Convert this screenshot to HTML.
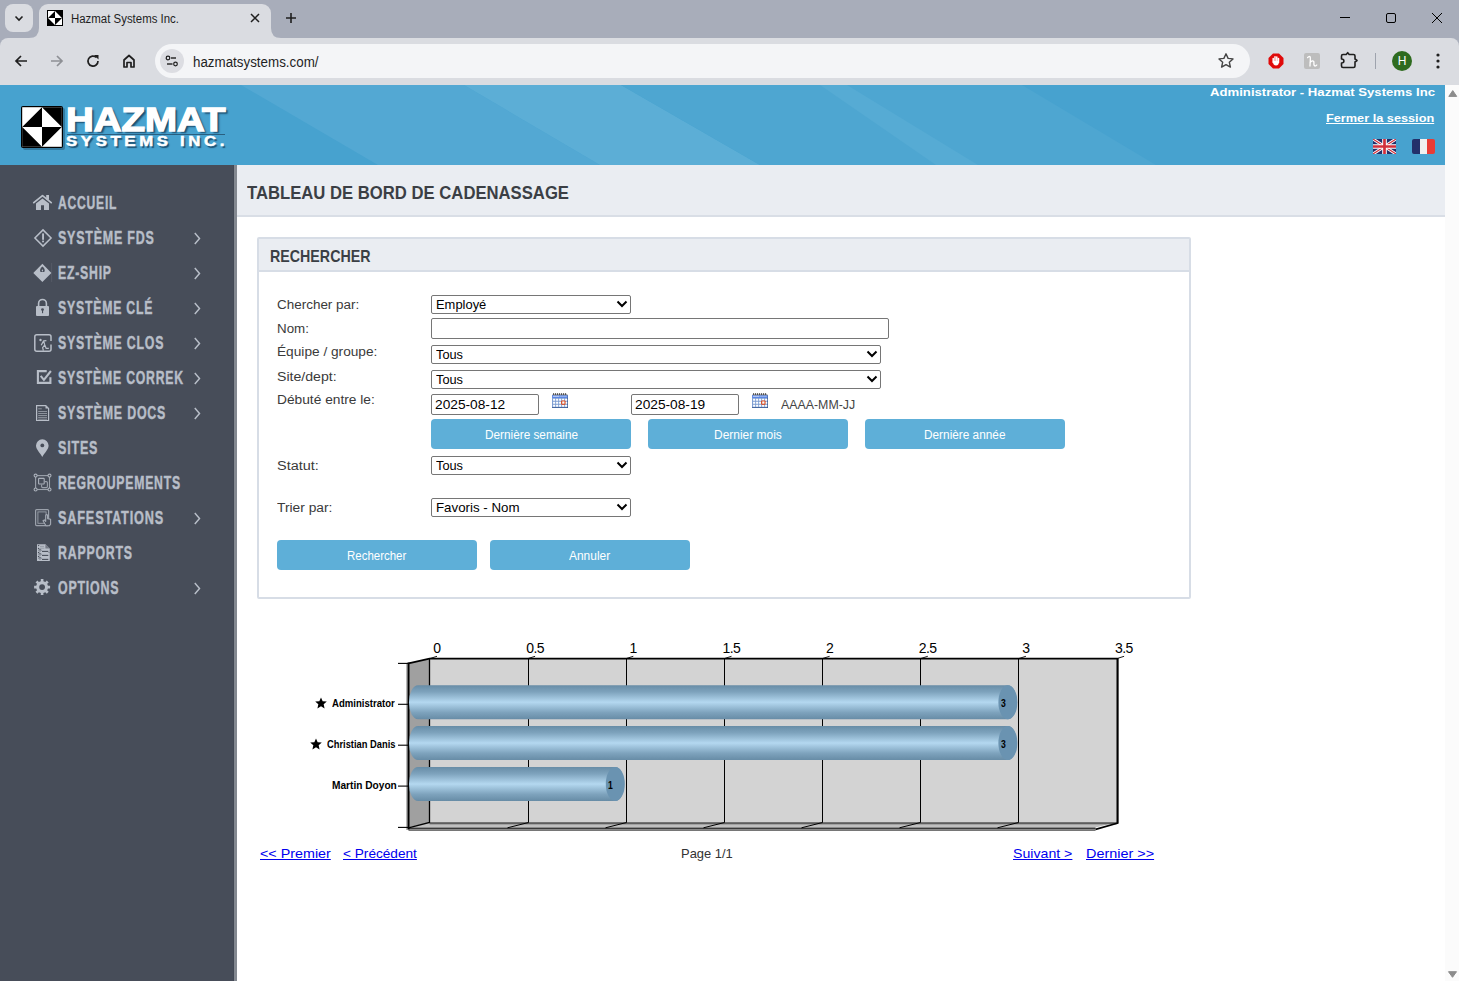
<!DOCTYPE html>
<html><head><meta charset="utf-8">
<style>
*{box-sizing:border-box;margin:0;padding:0}
html,body{width:1459px;height:981px;overflow:hidden;background:#fff;font-family:"Liberation Sans",sans-serif}
.a{position:absolute}
.t{position:absolute;white-space:nowrap;transform-origin:0 0}
</style></head><body>
<div class="a" style="left:0;top:0;width:1459px;height:48px;background:#a8adba"></div>
<div class="a" style="left:5px;top:4px;width:28px;height:28px;background:#dadce1;border-radius:8px"></div>
<svg class="a" style="left:13px;top:12px" width="12" height="12" viewBox="0 0 12 12"><path d="M2.5 4.5 L6 8 L9.5 4.5" fill="none" stroke="#1f1f1f" stroke-width="1.6"/></svg>
<div class="a" style="left:0;top:38px;width:1459px;height:47px;background:#dadce1;border-radius:8px 8px 0 0"></div>
<div class="a" style="left:39px;top:4px;width:232px;height:40px;background:#dadce1;border-radius:9px 9px 0 0"></div>
<svg class="a" style="left:29px;top:28px" width="10" height="10"><path d="M0 10 Q10 10 10 0 L10 10 Z" fill="#dadce1"/></svg>
<svg class="a" style="left:271px;top:28px" width="10" height="10"><path d="M10 10 Q0 10 0 0 L0 10 Z" fill="#dadce1"/></svg>
<svg class="a" style="left:47px;top:10px" width="16" height="16" viewBox="0 0 16 16"><rect x="0" y="0" width="16" height="16" fill="#000"/><rect x="1" y="1" width="14" height="14" fill="#fff"/><path d="M1 8 L8 1 L8 8 Z M8 1 L15 1 L15 8 Z M1 8 L1 15 L8 15 Z M8 8 L15 8 L8 15 Z" fill="#000"/></svg>
<svg class="a" style="left:250px;top:13px" width="10" height="10" viewBox="0 0 10 10"><path d="M1 1 L9 9 M9 1 L1 9" stroke="#1f1f1f" stroke-width="1.5"/></svg>
<svg class="a" style="left:285px;top:12px" width="12" height="12" viewBox="0 0 12 12"><path d="M6 1 V11 M1 6 H11" stroke="#1f1f1f" stroke-width="1.6"/></svg>
<svg class="a" style="left:1339px;top:12px" width="12" height="12"><path d="M1 5.5 H11" stroke="#000" stroke-width="1"/></svg>
<svg class="a" style="left:1385px;top:12px" width="12" height="12"><rect x="1.5" y="1.5" width="9" height="9" rx="1.5" fill="none" stroke="#000" stroke-width="1"/></svg>
<svg class="a" style="left:1431px;top:12px" width="12" height="12"><path d="M1 1 L11 11 M11 1 L1 11" stroke="#000" stroke-width="1"/></svg>
<svg class="a" style="left:13px;top:53px" width="16" height="16" viewBox="0 0 16 16"><path d="M14 8 H3 M8 3 L3 8 L8 13" fill="none" stroke="#1f1f1f" stroke-width="1.7"/></svg>
<svg class="a" style="left:49px;top:53px" width="16" height="16" viewBox="0 0 16 16"><path d="M2 8 H13 M8 3 L13 8 L8 13" fill="none" stroke="#8e9095" stroke-width="1.7"/></svg>
<svg class="a" style="left:85px;top:53px" width="16" height="16" viewBox="0 0 16 16"><path d="M13 8 A5 5 0 1 1 11.5 4.5" fill="none" stroke="#1f1f1f" stroke-width="1.7"/><path d="M9 2 H13.5 V6.5 Z" fill="#1f1f1f"/></svg>
<svg class="a" style="left:121px;top:53px" width="16" height="16" viewBox="0 0 16 16"><path d="M3 14 V7 L8 2.5 L13 7 V14 H10 V9.5 H6 V14 Z" fill="none" stroke="#1f1f1f" stroke-width="1.7" stroke-linejoin="round"/></svg>
<div class="a" style="left:155px;top:44px;width:1095px;height:34px;background:#f4f5f7;border-radius:17px"></div>
<div class="a" style="left:160px;top:49px;width:24px;height:24px;border-radius:12px;background:#dcdde2"></div>
<svg class="a" style="left:164px;top:53px" width="16" height="16" viewBox="0 0 16 16"><circle cx="4" cy="5" r="1.8" fill="none" stroke="#1f1f1f" stroke-width="1.2"/><path d="M7 5 H12" stroke="#1f1f1f" stroke-width="1.4"/><circle cx="11.5" cy="11" r="1.8" fill="none" stroke="#1f1f1f" stroke-width="1.2"/><path d="M3 11 H8.5" stroke="#1f1f1f" stroke-width="1.4"/></svg>
<svg class="a" style="left:1217px;top:52px" width="18" height="18" viewBox="0 0 18 18"><path d="M9 1.8 L11.1 6.4 L16 6.9 L12.3 10.2 L13.4 15.1 L9 12.6 L4.6 15.1 L5.7 10.2 L2 6.9 L6.9 6.4 Z" fill="none" stroke="#444" stroke-width="1.4" stroke-linejoin="round"/></svg>
<svg class="a" style="left:1268px;top:53px" width="16" height="16" viewBox="0 0 16 16"><path d="M5 0.5 H11 L15.5 5 V11 L11 15.5 H5 L0.5 11 V5 Z" fill="#e00a0a"/><path d="M5.2 9.5 V5.5 M7 9 V3.8 M8.8 9 V4 M10.5 9.5 V5.5" stroke="#fff" stroke-width="1.5" stroke-linecap="round"/><path d="M4.8 8 Q5 12.5 8 12.5 Q11 12.5 11 8 Z" fill="#fff"/></svg>
<div class="a" style="left:1304px;top:53px;width:16px;height:16px;background:#bdbdbd;border-radius:2px"></div>
<svg class="a" style="left:1304px;top:53px" width="16" height="16" viewBox="0 0 16 16"><path d="M3.6 4.6 C4.4 3.4 5.8 3.2 6.2 4 C6.6 5 6.1 9 6 13 M6 9.6 C7.6 7.6 9.8 7.4 9.9 9.2 C10 10.6 9.4 12.8 11 13 C11.8 13 12.4 12.6 12.8 12" fill="none" stroke="#fff" stroke-width="1.3" stroke-linecap="round" stroke-linejoin="round"/></svg>
<svg class="a" style="left:1338px;top:50px" width="22" height="22" viewBox="0 0 22 22"><path d="M5 4.5 H8.2 L9.7 2.7 L11.2 4.5 H15.5 A1.5 1.5 0 0 1 17 6 V9 L19 10.5 L17 12 V16 A1.5 1.5 0 0 1 15.5 17.5 H5 A1.5 1.5 0 0 1 3.5 16 V13 A2.4 2 0 0 0 3.5 9 V6 A1.5 1.5 0 0 1 5 4.5 Z" fill="none" stroke="#1f1f1f" stroke-width="1.6" stroke-linejoin="round"/></svg>
<div class="a" style="left:1375px;top:53px;width:1px;height:16px;background:#9ea3ad"></div>
<div class="a" style="left:1392px;top:51px;width:20px;height:20px;border-radius:10px;background:#2e6b1f;color:#fff;font-size:12px;text-align:center;line-height:20px">H</div>
<svg class="a" style="left:1434px;top:52px" width="8" height="18"><circle cx="4" cy="3" r="1.6" fill="#1f1f1f"/><circle cx="4" cy="9" r="1.6" fill="#1f1f1f"/><circle cx="4" cy="15" r="1.6" fill="#1f1f1f"/></svg>
<svg class="a" style="left:0;top:85px" width="1445" height="80" viewBox="0 0 1445 80">
<rect width="1445" height="80" fill="#47a2cf"/>
<polygon points="241,0 464,0 600,80 378,80" fill="#53a8d3"/>
<polygon points="464,0 621,0 760,80 600,80" fill="#5caed6"/>
<polygon points="621,0 1022,0 1156,80 760,80" fill="#4ea6d1"/>
<polygon points="820,0 847,0 978,80 936,80" fill="#56abd4"/>
</svg>
<svg class="a" style="left:21px;top:106px" width="45" height="45" viewBox="0 0 45 45">
<rect x="2" y="2" width="42" height="42" rx="2" fill="#1b4a66" opacity="0.45"/>
<rect x="0" y="0" width="42" height="42" rx="2" fill="#000"/>
<rect x="1.2" y="1.2" width="39.6" height="39.6" fill="#fff"/>
<path d="M1.2 21 L21 1.2 L21 21 Z M21 1.2 L40.8 1.2 L40.8 21 Z M1.2 21 L1.2 40.8 L21 40.8 Z M21 21 L40.8 21 L21 40.8 Z" fill="#000"/>
</svg>
<div class="a" style="left:67px;top:133.5px;width:158px;height:1px;background:#2a5f80"></div>
<svg class="a" style="left:1373px;top:139px" width="23" height="15" viewBox="0 0 60 40" preserveAspectRatio="none">
<rect width="60" height="40" fill="#22306b"/>
<path d="M0 0 L60 40 M60 0 L0 40" stroke="#fff" stroke-width="8"/>
<path d="M0 0 L60 40 M60 0 L0 40" stroke="#d22f3a" stroke-width="3"/>
<path d="M30 0 V40 M0 20 H60" stroke="#fff" stroke-width="12"/>
<path d="M30 0 V40 M0 20 H60" stroke="#d22f3a" stroke-width="7"/>
</svg>
<div class="a" style="left:1412px;top:139px;width:23px;height:15px;border-radius:2px;overflow:hidden;background:linear-gradient(90deg,#23306a 0,#23306a 33%,#f0f0f0 33%,#f0f0f0 66%,#e83b35 66%)"></div>
<div class="a" style="left:0;top:165px;width:235px;height:816px;background:#474d59"></div>
<div class="a" style="left:233px;top:165px;width:1px;height:816px;background:#434955"></div>
<div class="a" style="left:234px;top:165px;width:3px;height:816px;background:#838890"></div>
<svg class="a" style="left:0;top:0" width="60" height="620" viewBox="0 0 60 620">
<path d="M33.8 202.6 L42.5 195.6 L51.2 202.6" fill="none" stroke="#b8bec8" stroke-width="1.8" stroke-linecap="round" stroke-linejoin="round"/>
<rect x="46.2" y="195" width="2.8" height="4.8" fill="#b8bec8"/>
<path d="M36 203.6 L42.5 198.4 L49 203.6 V210 H44 V205.2 H41 V210 H36 Z" fill="#b8bec8"/>
<polygon points="43,229.9 51.1,238 43,246.1 34.9,238" fill="none" stroke="#b8bec8" stroke-width="1.5"/>
<rect x="42.1" y="233.4" width="1.9" height="6.4" fill="#b8bec8"/><rect x="42.1" y="240.6" width="1.9" height="1.7" fill="#b8bec8"/>
<polygon points="42.4,263.8 51.4,273 42.4,282 33.3,273" fill="#b8bec8"/>
<path d="M42.4 266.6 C44.6 268.4 45.3 270.2 44.3 272 H40.5 C39.5 270.2 40.2 268.4 42.4 266.6 Z" fill="#474d59"/>
<path d="M42.4 269.2 C43.2 270 43.3 271 42.4 271.6 C41.5 271 41.6 270 42.4 269.2 Z" fill="#b8bec8"/>
<rect x="51.3" y="263" width="0.8" height="19" fill="#6a707b" opacity="0.5"/>
<path d="M38.6 306.5 V303.4 A3.9 3.9 0 0 1 46.4 303.4 V306.5" fill="none" stroke="#b8bec8" stroke-width="1.6"/>
<rect x="36" y="306" width="13" height="10" rx="1" fill="#b8bec8"/>
<circle cx="42.5" cy="309.6" r="1.4" fill="#474d59"/><rect x="42" y="310" width="1.1" height="3.2" fill="#474d59"/>
<path d="M51 341 V336.8 A2 2 0 0 0 49 334.8 H36.8 A2 2 0 0 0 34.8 336.8 V349.2 A2 2 0 0 0 36.8 351.2 H49 A2 2 0 0 0 51 349.2 V344.6" fill="none" stroke="#b8bec8" stroke-width="1.5"/>
<circle cx="40.5" cy="340" r="1.2" fill="#b8bec8"/>
<path d="M46.4 340.6 L43.6 340.9 L41.2 345.2 M43.6 340.9 L44.8 345 L46.2 348.4 L48.8 348.4 M44.8 345 L42.6 347.6 L43.4 350.6" fill="none" stroke="#b8bec8" stroke-width="1.25" stroke-linejoin="round"/>
<path d="M46.7 371.1 H37.9 V382.9 H50.4 V377.2" fill="none" stroke="#b8bec8" stroke-width="2.1"/>
<path d="M40.7 375.8 L43.9 379.8 L50.9 371" fill="none" stroke="#b8bec8" stroke-width="2.1"/>
<path d="M36.6 405.6 H45.8 L48.6 408.4 V420.5 H36.6 Z" fill="none" stroke="#b8bec8" stroke-width="1.2"/>
<path d="M45.5 405.6 V408.6 H48.6 Z" fill="#b8bec8"/>
<path d="M38.2 408.8 H41.8" stroke="#8d939d" stroke-width="1"/>
<path d="M38.2 411.5 H47" stroke="#8d939d" stroke-width="1"/>
<path d="M38.2 413.5 H47" stroke="#8d939d" stroke-width="1"/>
<path d="M38.2 415.5 H47" stroke="#8d939d" stroke-width="1"/>
<path d="M38.2 417.4 H47" stroke="#8d939d" stroke-width="1"/>
<path d="M38.2 419.2 H47" stroke="#8d939d" stroke-width="1"/>
<path d="M42.3 456.9 C40.2 453.2 36 449.6 36 445.6 A6.3 6.3 0 0 1 48.6 445.6 C48.6 449.6 44.4 453.2 42.3 456.9 Z" fill="#b8bec8"/>
<circle cx="42.3" cy="445.4" r="1.9" fill="#474d59"/>
<rect x="35.6" y="475.6" width="13.9" height="13.9" fill="none" stroke="#9ba1ab" stroke-width="1.1"/>
<circle cx="35.6" cy="475.6" r="1.5" fill="#474d59" stroke="#aab0ba" stroke-width="1.1"/>
<circle cx="49.5" cy="475.6" r="1.5" fill="#474d59" stroke="#aab0ba" stroke-width="1.1"/>
<circle cx="35.6" cy="489.5" r="1.5" fill="#474d59" stroke="#aab0ba" stroke-width="1.1"/>
<circle cx="49.5" cy="489.5" r="1.5" fill="#474d59" stroke="#aab0ba" stroke-width="1.1"/>
<rect x="38.6" y="478.4" width="5.6" height="5.6" rx="0.6" fill="none" stroke="#aab0ba" stroke-width="1.1"/>
<path d="M44.6 481.6 H46.4 A1 1 0 0 1 47.4 482.6 V486.6 A1 1 0 0 1 46.4 487.6 H42.6 A1 1 0 0 1 41.6 486.6 V484.6" fill="none" stroke="#9ba1ab" stroke-width="1.1"/>
<rect x="35.6" y="509.6" width="13" height="16" rx="1" fill="none" stroke="#9ba1ab" stroke-width="1.2"/>
<rect x="37.9" y="511.9" width="8.2" height="11.4" fill="none" stroke="#9ba1ab" stroke-width="0.9"/>
<path d="M46 525.8 L43 520.8 L44.3 519.9 L45.7 521.4 V515.6 A0.95 0.95 0 0 1 47.6 515.6 V518.6 L50.6 519.3 V524.2 L49.3 525.8 Z" fill="#474d59" stroke="#a5abb5" stroke-width="1.1" stroke-linejoin="round"/>
<path d="M37 544.2 H45.6 L49.8 548.4 V561 H37 Z" fill="#b8bec8"/>
<path d="M45.4 544.2 L49.8 548.6 H45.4 Z" fill="#474d59" opacity="0.6"/>
<circle cx="38.6" cy="545.6" r="0.7" fill="#474d59"/>
<circle cx="38.6" cy="548.5" r="0.7" fill="#474d59"/>
<circle cx="38.6" cy="552.5" r="0.7" fill="#474d59"/>
<circle cx="38.6" cy="556.5" r="0.7" fill="#474d59"/>
<path d="M40 546.4 H44 M40 548.2 H44.4" stroke="#8d939d" stroke-width="0.8"/>
<path d="M42 551.4 H48.3" stroke="#474d59" stroke-width="1.1"/>
<ellipse cx="40" cy="550.1999999999999" rx="1.3" ry="0.9" fill="none" stroke="#474d59" stroke-width="0.6"/>
<path d="M42 555.4 H48.3" stroke="#474d59" stroke-width="1.1"/>
<ellipse cx="40" cy="554.1999999999999" rx="1.3" ry="0.9" fill="none" stroke="#474d59" stroke-width="0.6"/>
<path d="M42 559.4 H48.3" stroke="#474d59" stroke-width="1.1"/>
<ellipse cx="40" cy="558.1999999999999" rx="1.3" ry="0.9" fill="none" stroke="#474d59" stroke-width="0.6"/>
<path d="M49 552 V553" stroke="#474d59" stroke-width="0.6"/>
<path d="M40.81 581.24 L40.77 579.11 L43.43 579.11 L43.39 581.24 L45.33 582.05 L46.81 580.51 L48.69 582.39 L47.15 583.87 L47.96 585.81 L50.09 585.77 L50.09 588.43 L47.96 588.39 L47.15 590.33 L48.69 591.81 L46.81 593.69 L45.33 592.15 L43.39 592.96 L43.43 595.09 L40.77 595.09 L40.81 592.96 L38.87 592.15 L37.39 593.69 L35.51 591.81 L37.05 590.33 L36.24 588.39 L34.11 588.43 L34.11 585.77 L36.24 585.81 L37.05 583.87 L35.51 582.39 L37.39 580.51 L38.87 582.05 Z" fill="#b8bec8"/>
<circle cx="42.1" cy="587.1" r="2.9" fill="#474d59"/>
</svg>
<svg class="a" style="left:193px;top:232.1px" width="8" height="13" viewBox="0 0 8 13"><path d="M1.8 1 L6.5 6.5 L1.8 12" fill="none" stroke="#b8bec8" stroke-width="1.5"/></svg>
<svg class="a" style="left:193px;top:267.1px" width="8" height="13" viewBox="0 0 8 13"><path d="M1.8 1 L6.5 6.5 L1.8 12" fill="none" stroke="#b8bec8" stroke-width="1.5"/></svg>
<svg class="a" style="left:193px;top:302.1px" width="8" height="13" viewBox="0 0 8 13"><path d="M1.8 1 L6.5 6.5 L1.8 12" fill="none" stroke="#b8bec8" stroke-width="1.5"/></svg>
<svg class="a" style="left:193px;top:337.1px" width="8" height="13" viewBox="0 0 8 13"><path d="M1.8 1 L6.5 6.5 L1.8 12" fill="none" stroke="#b8bec8" stroke-width="1.5"/></svg>
<svg class="a" style="left:193px;top:372.1px" width="8" height="13" viewBox="0 0 8 13"><path d="M1.8 1 L6.5 6.5 L1.8 12" fill="none" stroke="#b8bec8" stroke-width="1.5"/></svg>
<svg class="a" style="left:193px;top:407.1px" width="8" height="13" viewBox="0 0 8 13"><path d="M1.8 1 L6.5 6.5 L1.8 12" fill="none" stroke="#b8bec8" stroke-width="1.5"/></svg>
<svg class="a" style="left:193px;top:512.1px" width="8" height="13" viewBox="0 0 8 13"><path d="M1.8 1 L6.5 6.5 L1.8 12" fill="none" stroke="#b8bec8" stroke-width="1.5"/></svg>
<svg class="a" style="left:193px;top:582.1px" width="8" height="13" viewBox="0 0 8 13"><path d="M1.8 1 L6.5 6.5 L1.8 12" fill="none" stroke="#b8bec8" stroke-width="1.5"/></svg>
<div class="a" style="left:1445px;top:85px;width:14px;height:896px;background:#fbfbfb"></div>
<svg class="a" style="left:1445px;top:85px" width="14" height="14"><path d="M3.8 11.4 L7.75 5.6 L11.7 11.4 Z" fill="#8c8c8c" stroke="#8c8c8c" stroke-width="1" stroke-linejoin="round"/></svg>
<svg class="a" style="left:1445px;top:966px" width="14" height="14"><path d="M3.5 5.7 L11.5 5.7 L7.5 11.3 Z" fill="#8c8c8c" stroke="#8c8c8c" stroke-width="1" stroke-linejoin="round"/></svg>
<div class="a" style="left:237px;top:165px;width:1208px;height:52px;background:#eaedf2;border-bottom:2px solid #d9dee6"></div>
<div class="a" style="left:257px;top:237px;width:934px;height:362px;border:2px solid #d7dde6;border-radius:2px;background:#fff"></div>
<div class="a" style="left:259px;top:239px;width:930px;height:33px;background:#eaedf2;border-bottom:2px solid #d7dde6"></div>
<div class="a" style="left:431px;top:295px;width:200px;height:19px;border:1px solid #767676;border-radius:2px;background:#fff"></div>
<svg class="a" style="left:616px;top:300px" width="12" height="8" viewBox="0 0 12 8"><path d="M1.5 1.5 L6 6 L10.5 1.5" fill="none" stroke="#000" stroke-width="2"/></svg>
<div class="a" style="left:431px;top:318px;width:458px;height:21px;border:1px solid #767676;border-radius:2px;background:#fff"></div>
<div class="a" style="left:431px;top:345px;width:450px;height:19px;border:1px solid #767676;border-radius:2px;background:#fff"></div>
<svg class="a" style="left:866px;top:350px" width="12" height="8" viewBox="0 0 12 8"><path d="M1.5 1.5 L6 6 L10.5 1.5" fill="none" stroke="#000" stroke-width="2"/></svg>
<div class="a" style="left:431px;top:370px;width:450px;height:19px;border:1px solid #767676;border-radius:2px;background:#fff"></div>
<svg class="a" style="left:866px;top:375px" width="12" height="8" viewBox="0 0 12 8"><path d="M1.5 1.5 L6 6 L10.5 1.5" fill="none" stroke="#000" stroke-width="2"/></svg>
<div class="a" style="left:431px;top:394px;width:108px;height:21px;border:1px solid #767676;border-radius:2px;background:#fff"></div>
<div class="a" style="left:631px;top:394px;width:108px;height:21px;border:1px solid #767676;border-radius:2px;background:#fff"></div>
<svg class="a" style="left:552px;top:393px" width="16" height="16" viewBox="0 0 16 16">
<rect x="0" y="2" width="16" height="13" rx="0.6" fill="#234680"/>
<rect x="0" y="2" width="15.4" height="12.4" fill="#7f9fd3"/>
<rect x="0.2" y="2" width="15.2" height="3" fill="#5a86e6"/>
<rect x="1" y="2.7" width="6.2" height="1" fill="#d6e2fa"/><rect x="7.5" y="2.7" width="7.3" height="1" fill="#a6c0f2"/>
<rect x="1.1" y="5.7" width="2.1" height="2.1" rx="0.3" fill="#fff"/><rect x="1.1" y="8.7" width="2.1" height="2.1" rx="0.3" fill="#fff"/><rect x="1.1" y="11.7" width="2.1" height="2.1" rx="0.3" fill="#fff"/><rect x="4.1" y="5.7" width="2.1" height="2.1" rx="0.3" fill="#fff"/><rect x="4.1" y="8.7" width="2.1" height="2.1" rx="0.3" fill="#fff"/><rect x="4.1" y="11.7" width="2.1" height="2.1" rx="0.3" fill="#fff"/><rect x="7.1" y="5.7" width="2.1" height="2.1" rx="0.3" fill="#fff"/><rect x="7.1" y="8.7" width="2.1" height="2.1" rx="0.3" fill="#fff"/><rect x="7.1" y="11.7" width="2.1" height="2.1" rx="0.3" fill="#fff"/><rect x="10.1" y="5.7" width="2.1" height="2.1" rx="0.3" fill="#fff"/><rect x="10.1" y="8.7" width="2.1" height="2.1" rx="0.3" fill="#fff"/><rect x="10.1" y="11.7" width="2.1" height="2.1" rx="0.3" fill="#fff"/><rect x="13.1" y="5.7" width="2.1" height="2.1" rx="0.3" fill="#fff"/><rect x="13.1" y="8.7" width="2.1" height="2.1" rx="0.3" fill="#fff"/><rect x="13.1" y="11.7" width="2.1" height="2.1" rx="0.3" fill="#fff"/>
<rect x="9.2" y="7.4" width="4.3" height="4.3" rx="0.8" fill="#e2400c"/>
<rect x="10.2" y="8.4" width="2.3" height="2.3" fill="#f0fbff"/>
<path d="M0.5 1.8 H15.5" stroke="#777" stroke-width="0.8"/>
<g fill="#111"><circle cx="1.6" cy="1" r="0.65"/><circle cx="3.6" cy="1" r="0.65"/><circle cx="5.6" cy="1" r="0.65"/><circle cx="7.6" cy="1" r="0.65"/><circle cx="9.6" cy="1" r="0.65"/><circle cx="11.6" cy="1" r="0.65"/><circle cx="13.6" cy="1" r="0.65"/></g>
</svg>
<svg class="a" style="left:752px;top:393px" width="16" height="16" viewBox="0 0 16 16">
<rect x="0" y="2" width="16" height="13" rx="0.6" fill="#234680"/>
<rect x="0" y="2" width="15.4" height="12.4" fill="#7f9fd3"/>
<rect x="0.2" y="2" width="15.2" height="3" fill="#5a86e6"/>
<rect x="1" y="2.7" width="6.2" height="1" fill="#d6e2fa"/><rect x="7.5" y="2.7" width="7.3" height="1" fill="#a6c0f2"/>
<rect x="1.1" y="5.7" width="2.1" height="2.1" rx="0.3" fill="#fff"/><rect x="1.1" y="8.7" width="2.1" height="2.1" rx="0.3" fill="#fff"/><rect x="1.1" y="11.7" width="2.1" height="2.1" rx="0.3" fill="#fff"/><rect x="4.1" y="5.7" width="2.1" height="2.1" rx="0.3" fill="#fff"/><rect x="4.1" y="8.7" width="2.1" height="2.1" rx="0.3" fill="#fff"/><rect x="4.1" y="11.7" width="2.1" height="2.1" rx="0.3" fill="#fff"/><rect x="7.1" y="5.7" width="2.1" height="2.1" rx="0.3" fill="#fff"/><rect x="7.1" y="8.7" width="2.1" height="2.1" rx="0.3" fill="#fff"/><rect x="7.1" y="11.7" width="2.1" height="2.1" rx="0.3" fill="#fff"/><rect x="10.1" y="5.7" width="2.1" height="2.1" rx="0.3" fill="#fff"/><rect x="10.1" y="8.7" width="2.1" height="2.1" rx="0.3" fill="#fff"/><rect x="10.1" y="11.7" width="2.1" height="2.1" rx="0.3" fill="#fff"/><rect x="13.1" y="5.7" width="2.1" height="2.1" rx="0.3" fill="#fff"/><rect x="13.1" y="8.7" width="2.1" height="2.1" rx="0.3" fill="#fff"/><rect x="13.1" y="11.7" width="2.1" height="2.1" rx="0.3" fill="#fff"/>
<rect x="9.2" y="7.4" width="4.3" height="4.3" rx="0.8" fill="#e2400c"/>
<rect x="10.2" y="8.4" width="2.3" height="2.3" fill="#f0fbff"/>
<path d="M0.5 1.8 H15.5" stroke="#777" stroke-width="0.8"/>
<g fill="#111"><circle cx="1.6" cy="1" r="0.65"/><circle cx="3.6" cy="1" r="0.65"/><circle cx="5.6" cy="1" r="0.65"/><circle cx="7.6" cy="1" r="0.65"/><circle cx="9.6" cy="1" r="0.65"/><circle cx="11.6" cy="1" r="0.65"/><circle cx="13.6" cy="1" r="0.65"/></g>
</svg>
<div class="a" style="left:431px;top:419px;width:200px;height:30px;background:#5eafd8;border-radius:4px"></div>
<div class="a" style="left:648px;top:419px;width:200px;height:30px;background:#5eafd8;border-radius:4px"></div>
<div class="a" style="left:865px;top:419px;width:200px;height:30px;background:#5eafd8;border-radius:4px"></div>
<div class="a" style="left:431px;top:456px;width:200px;height:19px;border:1px solid #767676;border-radius:2px;background:#fff"></div>
<svg class="a" style="left:616px;top:461px" width="12" height="8" viewBox="0 0 12 8"><path d="M1.5 1.5 L6 6 L10.5 1.5" fill="none" stroke="#000" stroke-width="2"/></svg>
<div class="a" style="left:431px;top:498px;width:200px;height:19px;border:1px solid #767676;border-radius:2px;background:#fff"></div>
<svg class="a" style="left:616px;top:503px" width="12" height="8" viewBox="0 0 12 8"><path d="M1.5 1.5 L6 6 L10.5 1.5" fill="none" stroke="#000" stroke-width="2"/></svg>
<div class="a" style="left:277px;top:540px;width:200px;height:30px;background:#5eafd8;border-radius:4px"></div>
<div class="a" style="left:490px;top:540px;width:200px;height:30px;background:#5eafd8;border-radius:4px"></div>
<svg class="a" style="left:0;top:0" width="1459" height="981" viewBox="0 0 1459 981">
<defs><linearGradient id="bg" x1="0" y1="0" x2="0" y2="1"><stop offset="0" stop-color="#678ca6"/><stop offset="0.2" stop-color="#7ea3bd"/><stop offset="0.5" stop-color="#b4d8f0"/><stop offset="0.8" stop-color="#7ea3bd"/><stop offset="1" stop-color="#678ca6"/></linearGradient></defs>
<rect x="429.5" y="659" width="687.0500000000002" height="163.5" fill="#d3d3d3"/>
<polygon points="408.5,663.5 429.5,659 429.5,822.5 408.5,827.5" fill="#a0a0a0"/>
<polygon points="429.5,822.2 1116.5500000000002,822.2 1095.5500000000002,827.6 408.5,827.6" fill="#c0c0c0"/>
<rect x="429.5" y="822.2" width="687.0500000000002" height="2.1" fill="#5e5e5e"/>
<rect x="408.5" y="827.5" width="687.0500000000002" height="1.7" fill="#3a3a3a"/>
<rect x="408.5" y="829.2" width="687.0500000000002" height="1.8" fill="#767676"/>
<rect x="406.3" y="663" width="1.2" height="167" fill="#9a9a9a"/>
<path d="M528.5 659 V822.5 L507.5 827.8" fill="none" stroke="#000" stroke-width="1"/>
<path d="M626.5 659 V822.5 L605.5 827.8" fill="none" stroke="#000" stroke-width="1"/>
<path d="M724.5 659 V822.5 L703.5 827.8" fill="none" stroke="#000" stroke-width="1"/>
<path d="M822.5 659 V822.5 L801.5 827.8" fill="none" stroke="#000" stroke-width="1"/>
<path d="M920.5 659 V822.5 L899.5 827.8" fill="none" stroke="#000" stroke-width="1"/>
<path d="M1018.5 659 V822.5 L997.5 827.8" fill="none" stroke="#000" stroke-width="1"/>
<path d="M429.5 659 V822.5 L408.5 827.8" fill="none" stroke="#000" stroke-width="1.3"/>
<path d="M408.5 663.4 L429.5 658.7 H1117.5500000000002" fill="none" stroke="#000" stroke-width="1.7"/>
<path d="M408.5 662.5 V829.5" fill="none" stroke="#000" stroke-width="2"/>
<path d="M1117.5500000000002 658 V823.5" fill="none" stroke="#000" stroke-width="2.2"/>
<path d="M1118.0500000000002 823 L1095.5500000000002 829.3" fill="none" stroke="#000" stroke-width="1.8"/>
<path d="M398 663.4 H408" stroke="#000" stroke-width="1.1"/>
<path d="M398 704.3 H408" stroke="#000" stroke-width="1.1"/>
<path d="M398 745.2 H408" stroke="#000" stroke-width="1.1"/>
<path d="M398 786.1 H408" stroke="#000" stroke-width="1.1"/>
<path d="M398 827.4 H408" stroke="#000" stroke-width="1.1"/>
<path d="M430.0 658.5 L437.0 656.3" stroke="#000" stroke-width="0.9"/>
<path d="M528.1 658.5 L535.1 656.3" stroke="#000" stroke-width="0.9"/>
<path d="M626.3 658.5 L633.3 656.3" stroke="#000" stroke-width="0.9"/>
<path d="M724.5 658.5 L731.5 656.3" stroke="#000" stroke-width="0.9"/>
<path d="M822.6 658.5 L829.6 656.3" stroke="#000" stroke-width="0.9"/>
<path d="M920.8 658.5 L927.8 656.3" stroke="#000" stroke-width="0.9"/>
<path d="M1018.9 658.5 L1025.9 656.3" stroke="#000" stroke-width="0.9"/>
<path d="M1117.1 658.5 L1124.1 656.3" stroke="#000" stroke-width="0.9"/>
<path d="M418 685.2 H1007.9000000000001 A9 17 0 0 1 1007.9000000000001 719.2 H418 A9 17 0 0 1 418 685.2 Z" fill="url(#bg)"/>
<ellipse cx="1007.9" cy="702.2" rx="9.5" ry="17" fill="#6a93b1"/>
<path d="M418 726 H1007.9000000000001 A9 17 0 0 1 1007.9000000000001 760 H418 A9 17 0 0 1 418 726 Z" fill="url(#bg)"/>
<ellipse cx="1007.9" cy="743.0" rx="9.5" ry="17" fill="#6a93b1"/>
<path d="M418 767 H615.3 A9 17 0 0 1 615.3 801 H418 A9 17 0 0 1 418 767 Z" fill="url(#bg)"/>
<ellipse cx="615.3" cy="784.0" rx="9.5" ry="17" fill="#6a93b1"/>
</svg>
<svg class="a" style="left:315px;top:696.8px" width="12" height="12" viewBox="0 0 24 24"><path d="M12.00 0.80 L15.29 8.47 L23.60 9.23 L17.33 14.73 L19.17 22.87 L12.00 18.60 L4.83 22.87 L6.67 14.73 L0.40 9.23 L8.71 8.47 Z" fill="#000"/></svg>
<svg class="a" style="left:309.7px;top:737.6px" width="12" height="12" viewBox="0 0 24 24"><path d="M12.00 0.80 L15.29 8.47 L23.60 9.23 L17.33 14.73 L19.17 22.87 L12.00 18.60 L4.83 22.87 L6.67 14.73 L0.40 9.23 L8.71 8.47 Z" fill="#000"/></svg>
<div class="t" style="left:71.00px;top:13.34px;font-size:12px;line-height:12px;font-weight:normal;color:#1f1f1f;font-family:'Liberation Sans',sans-serif;transform:scaleX(0.9526);">Hazmat Systems Inc.</div>
<div class="t" style="left:192.50px;top:54.65px;font-size:14px;line-height:14px;font-weight:normal;color:#1f1f1f;font-family:'Liberation Sans',sans-serif;transform:scaleX(0.9545);">hazmatsystems.com/</div>
<div class="t" style="left:65.50px;top:104.46px;font-size:32.3px;line-height:32.3px;font-weight:bold;color:#fff;font-family:'Liberation Sans',sans-serif;transform:scaleX(1.1909);-webkit-text-stroke:1.3px #fff;text-shadow:2px 2px 1.5px rgba(0,25,50,.6);">HAZMAT</div>
<div class="t" style="left:66.30px;top:135.22px;font-size:13.8px;line-height:13.8px;font-weight:bold;color:#fff;font-family:'Liberation Sans',sans-serif;transform:scaleX(1.2146);letter-spacing:3px;-webkit-text-stroke:0.5px #fff;text-shadow:1.5px 1.5px 1px rgba(0,25,50,.6);">SYSTEMS INC.</div>
<div class="t" style="left:1210.30px;top:85.88px;font-size:11.6px;line-height:11.6px;font-weight:bold;color:#fff;font-family:'Liberation Sans',sans-serif;transform:scaleX(1.1339);">Administrator - Hazmat Systems Inc</div>
<div class="t" style="left:1326.30px;top:112.48px;font-size:11.6px;line-height:11.6px;font-weight:bold;color:#fff;font-family:'Liberation Sans',sans-serif;transform:scaleX(1.0973);text-decoration:underline;">Fermer la session</div>
<div class="t" style="left:58.30px;top:194.36px;font-size:18.6px;line-height:18.6px;font-weight:bold;color:#b8bec8;font-family:'Liberation Sans',sans-serif;transform:scaleX(0.6502);letter-spacing:1.2px;-webkit-text-stroke:0.45px #b8bec8;">ACCUEIL</div>
<div class="t" style="left:58.30px;top:229.36px;font-size:18.6px;line-height:18.6px;font-weight:bold;color:#b8bec8;font-family:'Liberation Sans',sans-serif;transform:scaleX(0.6689);letter-spacing:1.2px;-webkit-text-stroke:0.45px #b8bec8;">SYSTÈME FDS</div>
<div class="t" style="left:58.30px;top:264.36px;font-size:18.6px;line-height:18.6px;font-weight:bold;color:#b8bec8;font-family:'Liberation Sans',sans-serif;transform:scaleX(0.6581);letter-spacing:1.2px;-webkit-text-stroke:0.45px #b8bec8;">EZ-SHIP</div>
<div class="t" style="left:58.30px;top:299.36px;font-size:18.6px;line-height:18.6px;font-weight:bold;color:#b8bec8;font-family:'Liberation Sans',sans-serif;transform:scaleX(0.6592);letter-spacing:1.2px;-webkit-text-stroke:0.45px #b8bec8;">SYSTÈME CLÉ</div>
<div class="t" style="left:58.30px;top:334.36px;font-size:18.6px;line-height:18.6px;font-weight:bold;color:#b8bec8;font-family:'Liberation Sans',sans-serif;transform:scaleX(0.6634);letter-spacing:1.2px;-webkit-text-stroke:0.45px #b8bec8;">SYSTÈME CLOS</div>
<div class="t" style="left:58.30px;top:369.36px;font-size:18.6px;line-height:18.6px;font-weight:bold;color:#b8bec8;font-family:'Liberation Sans',sans-serif;transform:scaleX(0.6578);letter-spacing:1.2px;-webkit-text-stroke:0.45px #b8bec8;">SYSTÈME CORREK</div>
<div class="t" style="left:58.30px;top:404.36px;font-size:18.6px;line-height:18.6px;font-weight:bold;color:#b8bec8;font-family:'Liberation Sans',sans-serif;transform:scaleX(0.6673);letter-spacing:1.2px;-webkit-text-stroke:0.45px #b8bec8;">SYSTÈME DOCS</div>
<div class="t" style="left:58.30px;top:439.36px;font-size:18.6px;line-height:18.6px;font-weight:bold;color:#b8bec8;font-family:'Liberation Sans',sans-serif;transform:scaleX(0.6730);letter-spacing:1.2px;-webkit-text-stroke:0.45px #b8bec8;">SITES</div>
<div class="t" style="left:58.30px;top:474.36px;font-size:18.6px;line-height:18.6px;font-weight:bold;color:#b8bec8;font-family:'Liberation Sans',sans-serif;transform:scaleX(0.6569);letter-spacing:1.2px;-webkit-text-stroke:0.45px #b8bec8;">REGROUPEMENTS</div>
<div class="t" style="left:58.30px;top:509.36px;font-size:18.6px;line-height:18.6px;font-weight:bold;color:#b8bec8;font-family:'Liberation Sans',sans-serif;transform:scaleX(0.6828);letter-spacing:1.2px;-webkit-text-stroke:0.45px #b8bec8;">SAFESTATIONS</div>
<div class="t" style="left:58.30px;top:544.36px;font-size:18.6px;line-height:18.6px;font-weight:bold;color:#b8bec8;font-family:'Liberation Sans',sans-serif;transform:scaleX(0.6624);letter-spacing:1.2px;-webkit-text-stroke:0.45px #b8bec8;">RAPPORTS</div>
<div class="t" style="left:58.30px;top:579.36px;font-size:18.6px;line-height:18.6px;font-weight:bold;color:#b8bec8;font-family:'Liberation Sans',sans-serif;transform:scaleX(0.6656);letter-spacing:1.2px;-webkit-text-stroke:0.45px #b8bec8;">OPTIONS</div>
<div class="t" style="left:246.50px;top:183.42px;font-size:19px;line-height:19px;font-weight:bold;color:#3b3f45;font-family:'Liberation Sans',sans-serif;transform:scaleX(0.8773);">TABLEAU DE BORD DE CADENASSAGE</div>
<div class="t" style="left:269.50px;top:247.51px;font-size:17px;line-height:17px;font-weight:bold;color:#3b3f45;font-family:'Liberation Sans',sans-serif;transform:scaleX(0.8377);">RECHERCHER</div>
<div class="t" style="left:276.80px;top:298.92px;font-size:12.5px;line-height:12.5px;font-weight:normal;color:#3a3a3a;font-family:'Liberation Sans',sans-serif;transform:scaleX(1.0767);">Chercher par:</div>
<div class="t" style="left:276.80px;top:322.72px;font-size:12.5px;line-height:12.5px;font-weight:normal;color:#3a3a3a;font-family:'Liberation Sans',sans-serif;transform:scaleX(1.0678);">Nom:</div>
<div class="t" style="left:276.80px;top:346.22px;font-size:12.5px;line-height:12.5px;font-weight:normal;color:#3a3a3a;font-family:'Liberation Sans',sans-serif;transform:scaleX(1.0943);">Équipe / groupe:</div>
<div class="t" style="left:276.80px;top:371.32px;font-size:12.5px;line-height:12.5px;font-weight:normal;color:#3a3a3a;font-family:'Liberation Sans',sans-serif;transform:scaleX(1.1301);">Site/dept:</div>
<div class="t" style="left:276.80px;top:394.12px;font-size:12.5px;line-height:12.5px;font-weight:normal;color:#3a3a3a;font-family:'Liberation Sans',sans-serif;transform:scaleX(1.0995);">Débuté entre le:</div>
<div class="t" style="left:276.80px;top:459.92px;font-size:12.5px;line-height:12.5px;font-weight:normal;color:#3a3a3a;font-family:'Liberation Sans',sans-serif;transform:scaleX(1.1594);">Statut:</div>
<div class="t" style="left:276.80px;top:502.12px;font-size:12.5px;line-height:12.5px;font-weight:normal;color:#3a3a3a;font-family:'Liberation Sans',sans-serif;transform:scaleX(1.1025);">Trier par:</div>
<div class="t" style="left:435.80px;top:297.80px;font-size:13px;line-height:13px;font-weight:normal;color:#000;font-family:'Liberation Sans',sans-serif;transform:scaleX(0.9945);">Employé</div>
<div class="t" style="left:435.80px;top:347.80px;font-size:13px;line-height:13px;font-weight:normal;color:#000;font-family:'Liberation Sans',sans-serif;transform:scaleX(0.9829);">Tous</div>
<div class="t" style="left:435.80px;top:372.80px;font-size:13px;line-height:13px;font-weight:normal;color:#000;font-family:'Liberation Sans',sans-serif;transform:scaleX(0.9829);">Tous</div>
<div class="t" style="left:435.00px;top:397.50px;font-size:13px;line-height:13px;font-weight:normal;color:#000;font-family:'Liberation Sans',sans-serif;transform:scaleX(1.0556);">2025-08-12</div>
<div class="t" style="left:635.00px;top:397.50px;font-size:13px;line-height:13px;font-weight:normal;color:#000;font-family:'Liberation Sans',sans-serif;transform:scaleX(1.0556);">2025-08-19</div>
<div class="t" style="left:780.50px;top:399.22px;font-size:12.5px;line-height:12.5px;font-weight:normal;color:#444;font-family:'Liberation Sans',sans-serif;transform:scaleX(0.9893);">AAAA-MM-JJ</div>
<div class="t" style="left:484.50px;top:429.42px;font-size:12.5px;line-height:12.5px;font-weight:normal;color:#fff;font-family:'Liberation Sans',sans-serif;transform:scaleX(0.9425);">Dernière semaine</div>
<div class="t" style="left:714.10px;top:429.42px;font-size:12.5px;line-height:12.5px;font-weight:normal;color:#fff;font-family:'Liberation Sans',sans-serif;transform:scaleX(0.9568);">Dernier mois</div>
<div class="t" style="left:924.25px;top:429.42px;font-size:12.5px;line-height:12.5px;font-weight:normal;color:#fff;font-family:'Liberation Sans',sans-serif;transform:scaleX(0.9458);">Dernière année</div>
<div class="t" style="left:435.80px;top:458.80px;font-size:13px;line-height:13px;font-weight:normal;color:#000;font-family:'Liberation Sans',sans-serif;transform:scaleX(0.9829);">Tous</div>
<div class="t" style="left:435.80px;top:500.80px;font-size:13px;line-height:13px;font-weight:normal;color:#000;font-family:'Liberation Sans',sans-serif;transform:scaleX(1.0230);">Favoris - Nom</div>
<div class="t" style="left:347.35px;top:550.42px;font-size:12.5px;line-height:12.5px;font-weight:normal;color:#fff;font-family:'Liberation Sans',sans-serif;transform:scaleX(0.9176);">Rechercher</div>
<div class="t" style="left:569.40px;top:550.42px;font-size:12.5px;line-height:12.5px;font-weight:normal;color:#fff;font-family:'Liberation Sans',sans-serif;transform:scaleX(0.9561);">Annuler</div>
<div class="t" style="left:433.31px;top:641.45px;font-size:14px;line-height:14px;font-weight:normal;color:#000;font-family:'Liberation Sans',sans-serif;letter-spacing:-0.6px;">0</div>
<div class="t" style="left:526.21px;top:641.45px;font-size:14px;line-height:14px;font-weight:normal;color:#000;font-family:'Liberation Sans',sans-serif;letter-spacing:-0.6px;">0.5</div>
<div class="t" style="left:629.61px;top:641.45px;font-size:14px;line-height:14px;font-weight:normal;color:#000;font-family:'Liberation Sans',sans-serif;letter-spacing:-0.6px;">1</div>
<div class="t" style="left:722.51px;top:641.45px;font-size:14px;line-height:14px;font-weight:normal;color:#000;font-family:'Liberation Sans',sans-serif;letter-spacing:-0.6px;">1.5</div>
<div class="t" style="left:825.91px;top:641.45px;font-size:14px;line-height:14px;font-weight:normal;color:#000;font-family:'Liberation Sans',sans-serif;letter-spacing:-0.6px;">2</div>
<div class="t" style="left:918.81px;top:641.45px;font-size:14px;line-height:14px;font-weight:normal;color:#000;font-family:'Liberation Sans',sans-serif;letter-spacing:-0.6px;">2.5</div>
<div class="t" style="left:1022.21px;top:641.45px;font-size:14px;line-height:14px;font-weight:normal;color:#000;font-family:'Liberation Sans',sans-serif;letter-spacing:-0.6px;">3</div>
<div class="t" style="left:1115.11px;top:641.45px;font-size:14px;line-height:14px;font-weight:normal;color:#000;font-family:'Liberation Sans',sans-serif;letter-spacing:-0.6px;">3.5</div>
<div class="t" style="left:331.70px;top:698.41px;font-size:10.5px;line-height:10.5px;font-weight:bold;color:#000;font-family:'Liberation Sans',sans-serif;transform:scaleX(0.9108);">Administrator</div>
<div class="t" style="left:326.50px;top:739.21px;font-size:10.5px;line-height:10.5px;font-weight:bold;color:#000;font-family:'Liberation Sans',sans-serif;transform:scaleX(0.8892);">Christian Danis</div>
<div class="t" style="left:331.70px;top:779.91px;font-size:10.5px;line-height:10.5px;font-weight:bold;color:#000;font-family:'Liberation Sans',sans-serif;transform:scaleX(0.9658);">Martin Doyon</div>
<div class="t" style="left:1001.20px;top:698.53px;font-size:10px;line-height:10px;font-weight:bold;color:#000;font-family:'Liberation Sans',sans-serif;transform:scaleX(0.8629);">3</div>
<div class="t" style="left:1001.20px;top:739.53px;font-size:10px;line-height:10px;font-weight:bold;color:#000;font-family:'Liberation Sans',sans-serif;transform:scaleX(0.8629);">3</div>
<div class="t" style="left:607.80px;top:780.74px;font-size:10px;line-height:10px;font-weight:bold;color:#000;font-family:'Liberation Sans',sans-serif;transform:scaleX(0.8629);">1</div>
<div class="t" style="left:260.00px;top:847.30px;font-size:13px;line-height:13px;font-weight:normal;color:#0000ee;font-family:'Liberation Sans',sans-serif;transform:scaleX(1.1009);text-decoration:underline;">&lt;&lt; Premier</div>
<div class="t" style="left:343.10px;top:847.30px;font-size:13px;line-height:13px;font-weight:normal;color:#0000ee;font-family:'Liberation Sans',sans-serif;transform:scaleX(1.0487);text-decoration:underline;">&lt; Précédent</div>
<div class="t" style="left:680.90px;top:847.30px;font-size:13px;line-height:13px;font-weight:normal;color:#333;font-family:'Liberation Sans',sans-serif;transform:scaleX(0.9953);">Page 1/1</div>
<div class="t" style="left:1013.40px;top:847.30px;font-size:13px;line-height:13px;font-weight:normal;color:#0000ee;font-family:'Liberation Sans',sans-serif;transform:scaleX(1.0883);text-decoration:underline;">Suivant &gt;</div>
<div class="t" style="left:1085.70px;top:847.30px;font-size:13px;line-height:13px;font-weight:normal;color:#0000ee;font-family:'Liberation Sans',sans-serif;transform:scaleX(1.1087);text-decoration:underline;">Dernier &gt;&gt;</div>
</body></html>
